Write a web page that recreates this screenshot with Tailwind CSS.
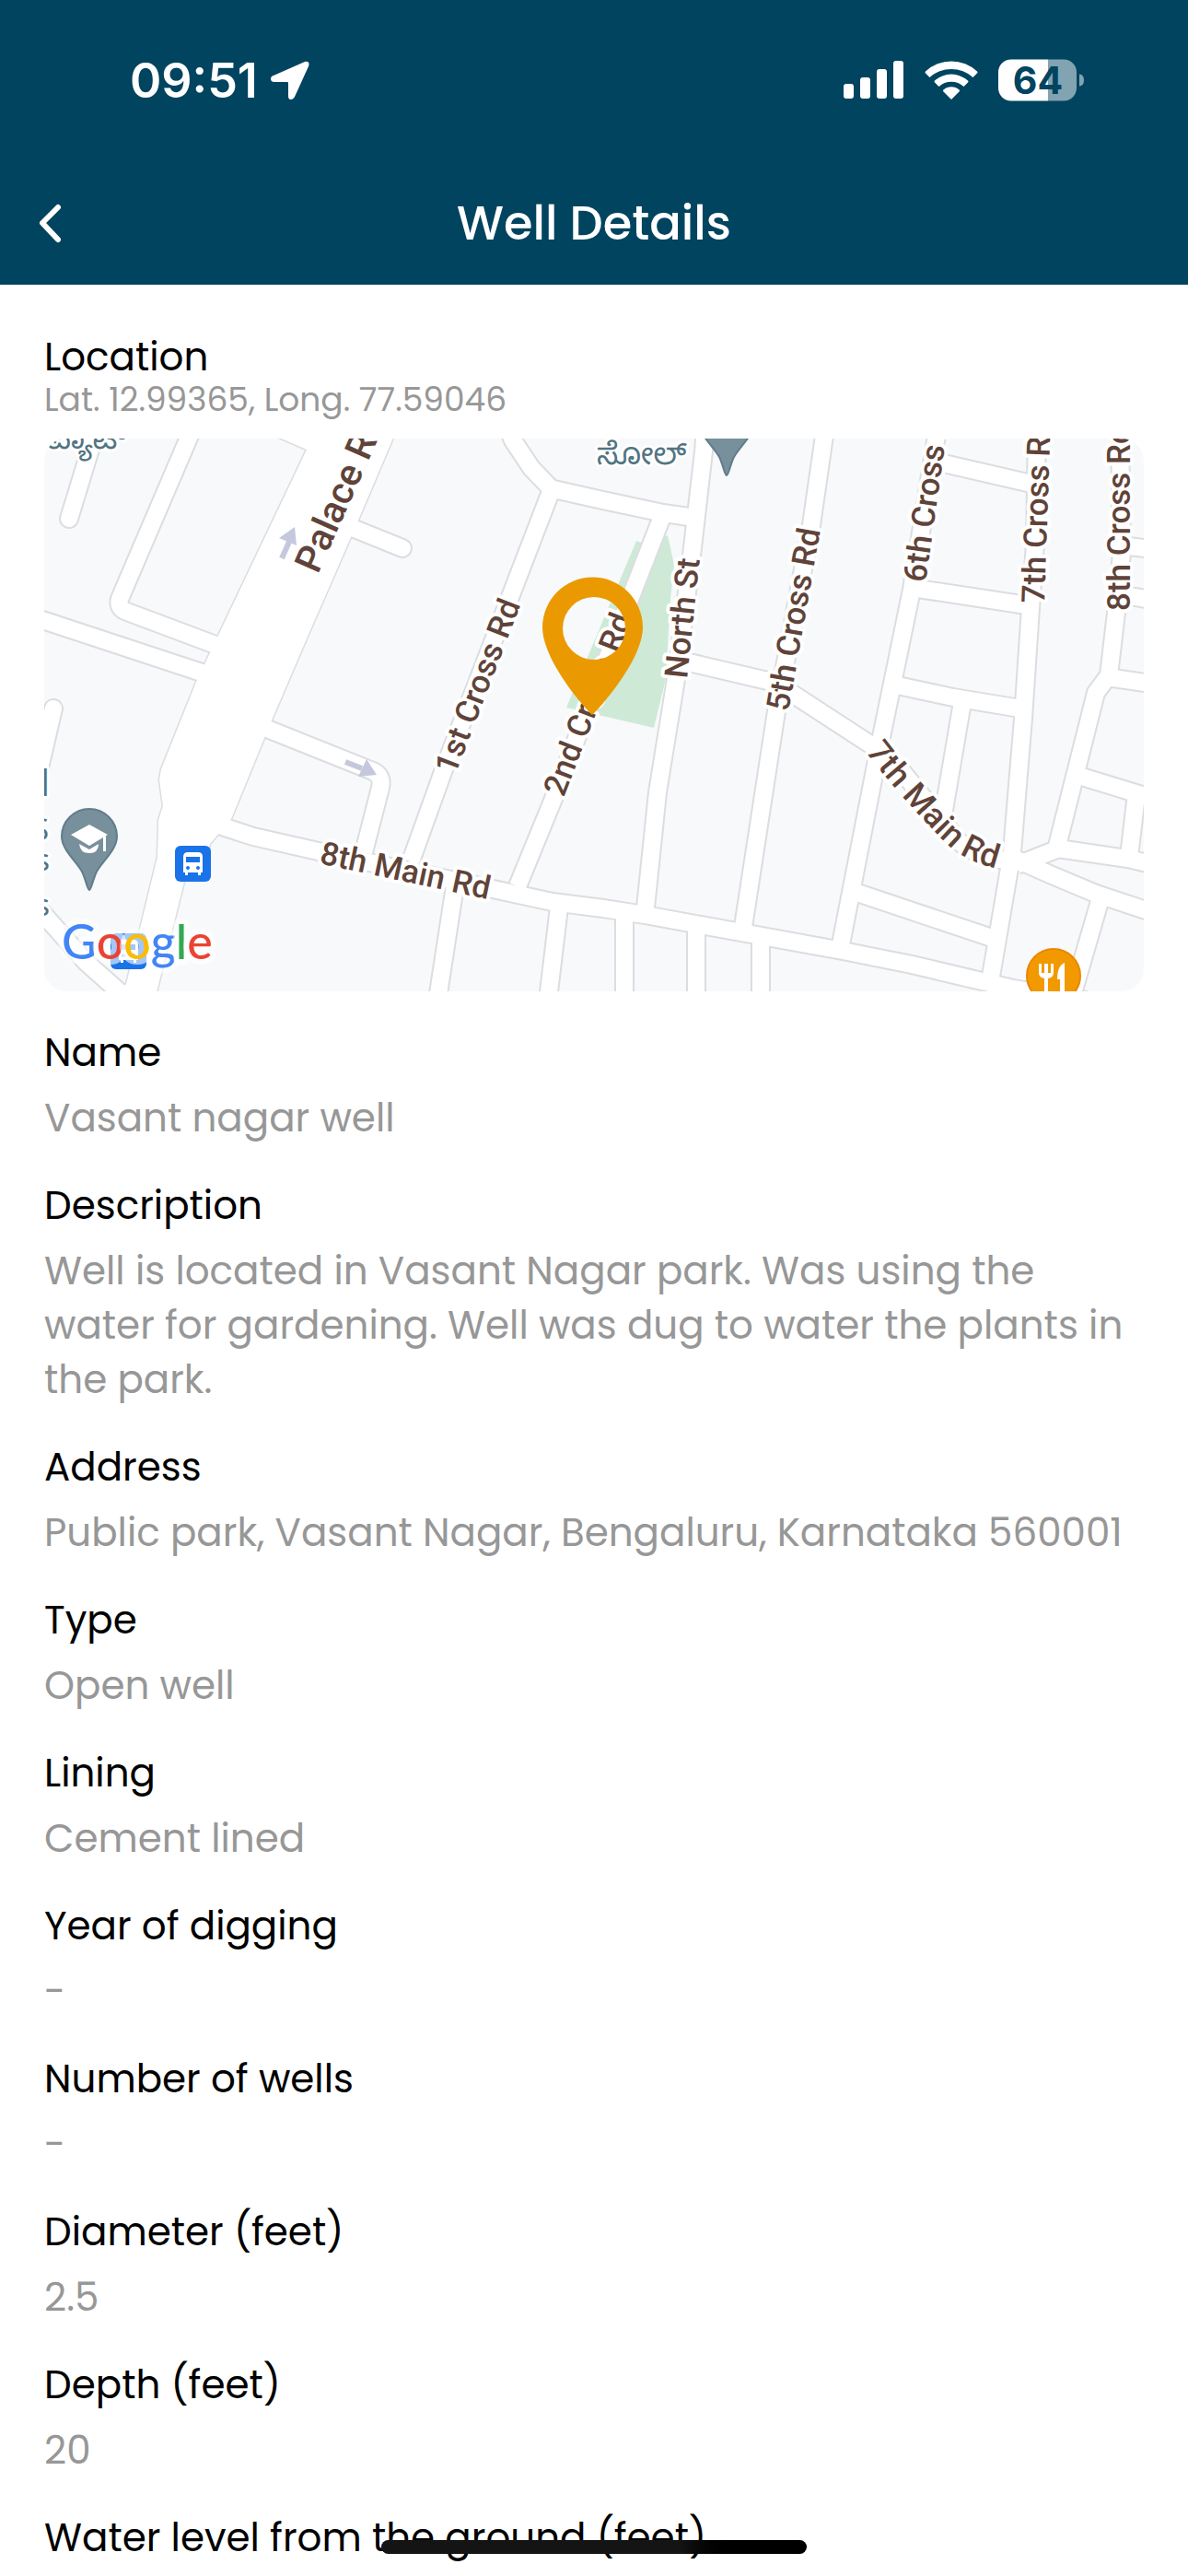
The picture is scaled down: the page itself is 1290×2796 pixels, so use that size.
<!DOCTYPE html>
<html lang="en">
<head>
<meta charset="utf-8">
<meta name="viewport" content="width=device-width, initial-scale=1">
<title>Well Details</title>
<script src="https://cdn.jsdelivr.net/npm/@tailwindcss/browser@4"></script>
</head>
<body class="min-h-screen bg-white font-['Poppins','Inter',sans-serif] text-black">
  <header class="bg-[#00445f] text-white">
    <div class="flex h-[174px] items-center justify-between pl-[141px] pr-28">
      <div class="flex items-center gap-[14px]">
        <span class="pt-[2px] font-['Inter',sans-serif] text-[52px] leading-[60px] font-semibold">09:51</span>
        <svg class="h-[42px] w-[42px]" viewBox="0 0 42 42" fill="currentColor" aria-hidden="true"><path d="M37 1 Q43 0 41 6 L26 39 Q24.500 42 21.500 42 Q19 42 19 38 V24 Q19 23 18 23 H4 Q0 23 0 19.500 Q0 17 3 16 Z"/></svg>
      </div>
      <div class="flex items-center gap-[22px]">
        <svg class="h-[42px] w-[66px]" viewBox="0 0 66 42" fill="currentColor" aria-hidden="true"><rect x="0" y="25" width="11" height="16" rx="3"/><rect x="18" y="18" width="11" height="23" rx="3"/><rect x="36" y="9" width="11" height="32" rx="3"/><rect x="54" y="0" width="11" height="41" rx="3"/></svg>
        <svg class="h-[42px] w-[58px]" viewBox="0 0 58 42" fill="currentColor" aria-hidden="true"><path d="M1 11.500 A41 41 0 0 1 57 11.500 Q58 12.500 57 13.500 L52.500 18 A35 35 0 0 0 5.500 18 L1 13.500 Q0 12.500 1 11.500 Z"/><path d="M11 21.500 A27 27 0 0 1 47 21.500 Q48 22.500 47 23.500 L42.500 28 A20 20 0 0 0 15.500 28 L11 23.500 Q10 22.500 11 21.500 Z"/><path d="M20.500 31.500 A13 13 0 0 1 37.500 31.500 Q38.500 32.500 37.500 33.500 L29 42 L20.500 33.500 Q19.500 32.500 20.500 31.500 Z"/></svg>
        <svg class="h-[46px] w-[94px]" viewBox="0 0 94 46" role="img" aria-label="Battery 64 percent"><path d="M54 .5 H71 A14 14 0 0 1 85 14.500 V31.500 A14 14 0 0 1 71 45.500 H54 Z" fill="#82a3b1"/><path d="M54 .5 H14 A14 14 0 0 0 0 14.500 V31.500 A14 14 0 0 0 14 45.500 H54 Z" fill="#fff"/><path d="M88 16.500 Q93 17 93 23 Q93 29 88 29.500 Z" fill="#82a3b1"/><text x="43" y="38" text-anchor="middle" font-family="Inter, sans-serif" font-size="41" font-weight="700" fill="#00445f">64</text></svg>
      </div>
    </div>
    <div class="grid h-[135px] grid-cols-[1fr_auto_1fr] items-center px-10">
      <button type="button" aria-label="Back" class="w-fit"><svg class="h-11 w-7" viewBox="0 0 28 44" fill="none" stroke="currentColor" stroke-width="6" stroke-linecap="round" stroke-linejoin="round" aria-hidden="true"><path d="M23 5 L6 22 L23 40"/></svg></button>
      <h1 class="text-[51px] leading-[72px] font-medium">Well Details</h1>
    </div>
  </header>

  <main class="px-12 pt-[50px]">
    <section>
      <h2 class="text-[42px] leading-[57px]">Location</h2>
      <p class="text-[36px] leading-[36px] text-[#979797]">Lat. 12.99365, Long. 77.59046</p>
      <svg class="mt-6 block h-auto w-full rounded-[24px]" viewBox="48 476 1194 600" role="img" aria-label="Map of the well location">
        <defs>
          <g id="roads">
            <g stroke-linecap="round">
              <path d="M104 468 L75 563"/><path d="M375 570 L437 595"/><path d="M58 769 L38 855"/>
            </g>
            <path d="M208 468 L130 650 Q127 660 138 664 L234 700"/>
            <path d="M40 671 L222 731"/>
            <path d="M280 787 L405 837 Q416 842 413 855 L395 925"/>
            <path d="M235 895 L275 908 L350 925 L600 979 L655 986 L700 993 L915 1032 L990 1047 L1100 1073 L1180 1086"/>
            <path d="M552 466 L557 478 L577 508 L599 531 L554 648 L482 835 L446 935"/>
            <path d="M597 530 L650 542 L720 557 L755 562"/>
            <path d="M766 466 L764 490 L751 603 L734 737 L714 860 L701 985"/>
            <path d="M720 558 L688 640 L601 867 L562 962"/>
            <path d="M896 466 L894 480 L881 570 L843 772 L807 1006"/>
            <path d="M740 717 L842 741 L945 808 L980 838 L1040 912 Q1060 932 1108 936"/>
            <path d="M1018 466 L990 640 L957 800 L913 1025"/>
            <path d="M1016 501 L1120 525"/><path d="M990 638 L1115 657"/><path d="M970 743 L1035 757 L1108 769"/>
            <path d="M1045 762 L1024 885"/>
            <path d="M1126 466 L1124 590 L1119 660 L1111 780 L1099 925 L1076 1060"/>
            <path d="M1216 466 L1218 600 L1212 665 L1204 733 L1190 752 L1147 922 L1104 939"/>
            <path d="M1218 592 L1250 596"/><path d="M1215 645 L1250 651"/><path d="M1202 735 L1250 742"/>
            <path d="M1168 841 L1250 866"/><path d="M1234 862 L1226 930"/><path d="M1142 920 L1225 932 L1250 938"/>
            <path d="M1104 933 L1140 949 L1190 970 L1250 990"/><path d="M1195 975 L1163 1085"/>
            <path d="M925 967 L1080 1019"/>
            <path d="M678 995 V1085"/><path d="M756 1008 V1085"/><path d="M826 1020 V1085"/>
            <path d="M607 985 L595 1085"/><path d="M495 955 L475 1085"/><path d="M40 984 L93 1044 L130 1077"/>
          </g>
          <path id="avenue" d="M280 465 L333 488 L214 738 L175 835 L173 847 L177 875 L172 890 L171 930 L152 1008 L137 1068 L120 1085 L168 1085 L200 957 L226 927 L228 916 L251 889 L269 845 L294 784 L330 700 L388 567 L430 468 Z"/>
          <path id="pin" d="M0 0 C-2 0 -4 -12 -8 -20 C-14 -31 -30 -44 -30 -58 A30 30 0 0 1 30 -58 C30 -44 14 -31 8 -20 C4 -12 2 0 0 0 Z"/>
          <g id="bus"><rect width="39" height="39" rx="6" fill="#1a73e8"/><path d="M9 12 Q9 7 14 7 H25 Q30 7 30 12 V29 H28 V32 H25 V29 H14 V32 H11 V29 H9 Z" fill="#fff"/><path d="M12 12 H27 V18 H12 Z M12 24 a2 2 0 1 0 4 0 a2 2 0 1 0 -4 0 M23 24 a2 2 0 1 0 4 0 a2 2 0 1 0 -4 0" fill="#1a73e8"/></g>
          <path id="seventh-main" d="M940 816 Q975 862 1024 912 Q1048 936 1085 943 L1125 951"/>
        </defs>
        <rect x="48" y="476" width="1194" height="600" fill="#f8f9fb"/>
        <path d="M691 587 L699 590 L725 581 L732 613 L728 650 L723 737 L710 790 L615 768 Z" fill="#ceead6"/>
        <g fill="none" stroke="#dcdde1" stroke-width="22"><use href="#roads"/></g>
        <use href="#avenue" fill="#fff" stroke="#dcdde1" stroke-width="3"/>
        <g fill="none" stroke="#fff" stroke-width="18"><use href="#roads"/></g>
        <use href="#avenue" fill="#fff"/>

        <g stroke="#c5c8dd" stroke-width="6" fill="#c5c8dd"><path d="M306 606 L314 588"/><path d="M320 572 L303 584 L322 592 Z" stroke="none"/><path d="M375 827 L393 834"/><path d="M409 841 L398 824 L389 843 Z" stroke="none"/></g>

        <g font-family="Roboto, sans-serif" font-size="35" font-weight="500" fill="#5f4339" stroke="#fff" stroke-width="8" stroke-linejoin="round" paint-order="stroke">
          <text font-size="41" transform="translate(345 624) rotate(-66)">Palace Rd</text>
          <text transform="translate(346 937) rotate(12)">8th Main Rd</text>
          <text transform="translate(494 842) rotate(-69)">1st Cross Rd</text>
          <text transform="translate(612 866) rotate(-69)">2nd Cross Rd</text>
          <text transform="translate(746 737) rotate(-84)">North St</text>
          <text transform="translate(856 773) rotate(-80)">5th Cross Rd</text>
          <text transform="translate(1005 633) rotate(-82)">6th Cross Rd</text>
          <text transform="translate(1134 655) rotate(-88)">7th Cross Rd</text>
          <text transform="translate(1227 663) rotate(-90)">8th Cross Rd</text>
          <text font-size="36"><textPath href="#seventh-main">7th Main Rd</textPath></text>
        </g>
        <g font-family="'Noto Sans Kannada', Roboto, sans-serif" font-size="33" fill="#527482" stroke="#fff" stroke-width="6" stroke-linejoin="round" paint-order="stroke">
          <text x="51" y="487">ಪ್ಯಾಟ್</text>
          <text x="648" y="504">ಸೋಲ್</text>
          <text x="54" y="864" text-anchor="end" font-size="40">l</text>
          <text x="53" y="912" text-anchor="end">S</text>
          <text x="54" y="945" text-anchor="end">s</text>
          <text x="54" y="994" text-anchor="end">s</text>
        </g>

        <use href="#pin" x="789" y="516" fill="#78909c" stroke="#607d8b" stroke-width="2"/>
        <use href="#pin" x="97" y="966" fill="#78909c" stroke="#607d8b" stroke-width="2"/>
        <path d="M97 895 L117 906 L115 907 V924 H112 V909 L97 918 L77 906 Z M86 916 L97 922 L107 916 Q107 926 97 926 Q87 926 86 916 Z" fill="#fff"/>
        <use href="#bus" x="190" y="918"/>
        <use href="#bus" x="120" y="1013"/>
        <circle cx="1144" cy="1059" r="29" fill="#f29900" stroke="#ea8600" stroke-width="2"/>
        <path d="M1128 1046 V1056 Q1128 1061 1134 1062 V1080 H1138 V1062 Q1144 1061 1144 1056 V1046 H1141 V1056 H1138 V1046 H1134 V1056 H1131 V1046 Z M1156 1045 Q1148 1048 1148 1063 H1151 V1080 H1156 Z" fill="#fff"/>

        <path fill-rule="evenodd" d="M643 776 C632 766 589 715 589 681 A54.500 54.500 0 0 1 698 681 C698 715 654 766 643 776 Z M645 648 A34 34 0 1 0 645 716 A34 34 0 1 0 645 648 Z" fill="#ea9a00"/>

        <text x="67" y="1041" font-family="Lato, sans-serif" font-size="52" font-weight="500" stroke="#fff" stroke-opacity=".6" stroke-width="12" stroke-linejoin="round" paint-order="stroke"><tspan fill="#4285f4">G</tspan><tspan fill="#ea4335">o</tspan><tspan fill="#fbbc04">o</tspan><tspan fill="#4285f4">g</tspan><tspan fill="#34a853">l</tspan><tspan fill="#ea4335">e</tspan></text>
      </svg>
    </section>

    <dl class="mt-[37px] flex flex-col gap-9 text-[42px] leading-[59px]">
      <div class="flex flex-col gap-3"><dt>Name</dt><dd class="text-[#979797]">Vasant nagar well</dd></div>
      <div class="flex flex-col gap-3"><dt>Description</dt><dd class="text-[#979797]">Well is located in Vasant Nagar park. Was using the water for gardening. Well was dug to water the plants in the park.</dd></div>
      <div class="flex flex-col gap-3"><dt>Address</dt><dd class="text-[#979797]">Public park, Vasant Nagar, Bengaluru, Karnataka 560001</dd></div>
      <div class="flex flex-col gap-3"><dt>Type</dt><dd class="text-[#979797]">Open well</dd></div>
      <div class="flex flex-col gap-3"><dt>Lining</dt><dd class="text-[#979797]">Cement lined</dd></div>
      <div class="flex flex-col gap-3"><dt>Year of digging</dt><dd class="text-[#979797]">-</dd></div>
      <div class="flex flex-col gap-3"><dt>Number of wells</dt><dd class="text-[#979797]">-</dd></div>
      <div class="flex flex-col gap-3"><dt>Diameter (feet)</dt><dd class="text-[#979797]">2.5</dd></div>
      <div class="flex flex-col gap-3"><dt>Depth (feet)</dt><dd class="text-[#979797]">20</dd></div>
      <div><dt>Water level from the ground (feet)</dt></div>
    </dl>
  </main>
  <div class="fixed bottom-6 left-1/2 h-[15px] w-[462px] -translate-x-1/2 rounded-full bg-linear-to-r from-[#141414] from-70% to-black to-85%"></div>
</body>
</html>
